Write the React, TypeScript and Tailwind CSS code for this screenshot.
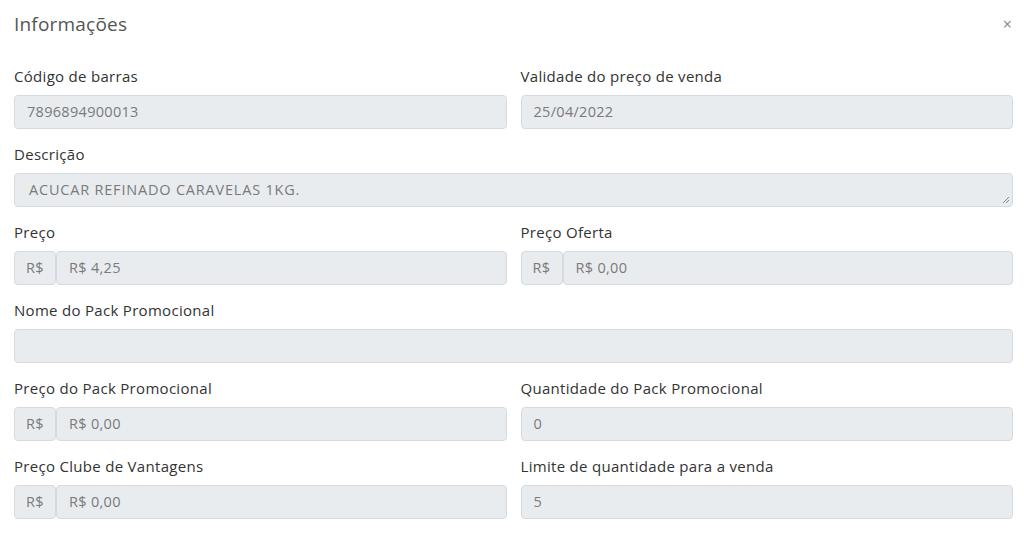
import React from "react";

const font = { fontFamily: '"Open Sans", "Noto Sans", sans-serif' };

function Label({ children }: { children: React.ReactNode }) {
  return (
    <div className="h-[20px] mb-[9px] text-[15px] leading-[20px] font-medium tracking-[0.3px] text-[#333] whitespace-nowrap">
      {children}
    </div>
  );
}

const box =
  "bg-[#e9ecef] border border-[#d6dae0] rounded-[4px] text-[14.5px] text-[#7a7a7a]";

function Field({ label, value }: { label: string; value: string }) {
  return (
    <div className="mb-[15px]">
      <Label>{label}</Label>
      <div className={"h-[34px] flex items-center px-[12px] tracking-[0.3px] " + box}>{value}</div>
    </div>
  );
}

function MoneyField({ label, value }: { label: string; value: string }) {
  return (
    <div className="mb-[15px]">
      <Label>{label}</Label>
      <div className="h-[34px] flex">
        <div className={"w-[42px] flex items-center justify-center tracking-[0.3px] " + box}>R$</div>
        <div className={"flex-1 flex items-center px-[12px] tracking-[0.3px] " + box}>{value}</div>
      </div>
    </div>
  );
}

export default function App() {
  return (
    <div className="w-[1024px] h-[538px] bg-white overflow-hidden" style={font}>
      <div className="h-[48px] flex items-center justify-between pl-[14px] pr-[12px]">
        <div className="text-[19px] tracking-[0.2px] text-[#555]">Informações</div>
        <div className="text-[16px] text-[#888] leading-none">×</div>
      </div>
      <div className="pl-[14px] pr-[11px] pt-[18px]">
        <div className="grid grid-cols-2 gap-x-[14px]">
          <Field label="Código de barras" value="7896894900013" />
          <Field label="Validade do preço de venda" value="25/04/2022" />
        </div>
        <div className="mb-[15px]">
          <Label>Descrição</Label>
          <div className={"relative h-[34px] flex items-center px-[14px] tracking-[0.8px] " + box}>
            ACUCAR REFINADO CARAVELAS 1KG.
            <svg className="absolute right-[2px] bottom-[2px]" width="8" height="8" viewBox="0 0 8 8">
              <path d="M7 1L1 7M7 4L4 7" stroke="#888" strokeWidth="1" />
            </svg>
          </div>
        </div>
        <div className="grid grid-cols-2 gap-x-[14px]">
          <MoneyField label="Preço" value="R$ 4,25" />
          <MoneyField label="Preço Oferta" value="R$ 0,00" />
        </div>
        <Field label="Nome do Pack Promocional" value="" />
        <div className="grid grid-cols-2 gap-x-[14px]">
          <MoneyField label="Preço do Pack Promocional" value="R$ 0,00" />
          <Field label="Quantidade do Pack Promocional" value="0" />
          <MoneyField label="Preço Clube de Vantagens" value="R$ 0,00" />
          <Field label="Limite de quantidade para a venda" value="5" />
        </div>
      </div>
    </div>
  );
}
